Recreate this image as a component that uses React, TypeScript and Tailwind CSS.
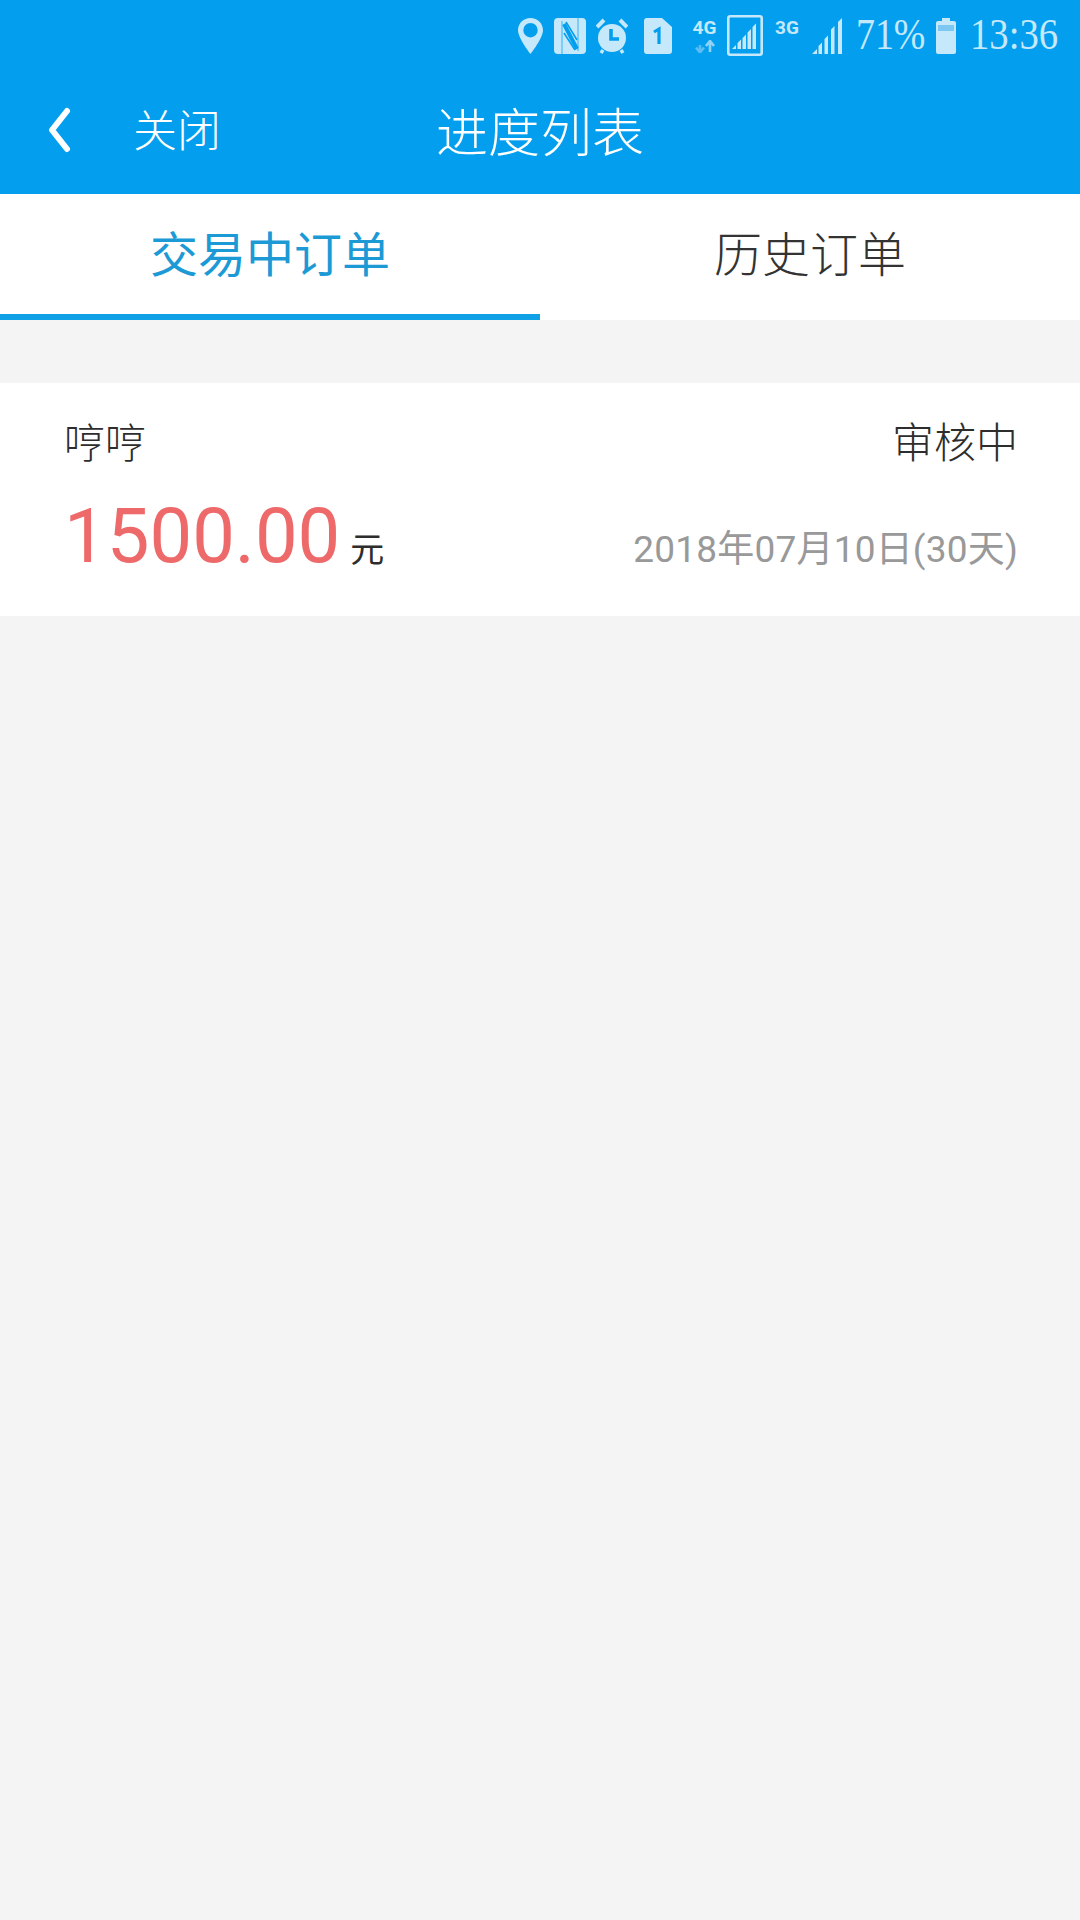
const cjk = "font-['Roboto','Noto_Sans_CJK_SC',sans-serif]";

function StatusBar() {
  const c = "#c5e8fb";
  return (
    <div className="h-[70px] flex items-center justify-end pr-[18px] text-[#c5e8fb] font-['Liberation_Serif','Noto_Sans_CJK_SC',serif]">
      <svg width="25" height="36" viewBox="0 0 25 36" className="mt-[2px]">
        <path fillRule="evenodd" fill={c} d="M12.5 0C5.6 0 0 5.4 0 12.2 0 20 12.5 36 12.5 36S25 20 25 12.2C25 5.4 19.4 0 12.5 0Zm0 5a7.2 7.2 0 1 1 0 14.4 7.2 7.2 0 0 1 0-14.4Z" />
      </svg>
      <svg width="32" height="36" viewBox="0 0 32 36" className="ml-[11px] mt-[2px]">
        <rect width="32" height="36" rx="4" fill={c} />
        <path d="M8 36V3M24 0v33" stroke="#039fee" strokeWidth="1.6" opacity=".45" />
        <path d="M10 6 23 31" fill="none" stroke="#039fee" strokeWidth="4" />
        <path d="M10 15 21 32M12 4l11 18" fill="none" stroke="#039fee" strokeWidth="1.6" />
      </svg>
      <svg width="32" height="36" viewBox="0 0 32 36" className="ml-[10px] mt-[2px]">
        <circle cx="16" cy="20" r="14" fill={c} />
        <path d="M15 11v10h8" fill="none" stroke="#039fee" strokeWidth="3.6" />
        <path d="M1 9 8 2M31 9l-7-7" stroke={c} strokeWidth="4" />
        <path d="m7 32-2 3M25 32l2 3" stroke={c} strokeWidth="3.4" />
      </svg>
      <svg width="28" height="36" viewBox="0 0 28 36" className="ml-[16px] mt-[2px]">
        <path d="M3 0h15l10 9v24a3 3 0 0 1-3 3H3a3 3 0 0 1-3-3V3a3 3 0 0 1 3-3Z" fill={c} />
        <path d="M10 14l5-3v15" fill="none" stroke="#039fee" strokeWidth="3.2" />
      </svg>
      <div className="ml-[20px] w-[25px] h-[36px] flex flex-col items-center mt-[4px]">
        <span className="font-['Roboto'] font-bold text-[19px] leading-[18px]">4G</span>
        <svg width="22" height="13" viewBox="0 0 22 13" className="mt-[3px]">
          <path d="M6 12V5M2 7.500l4 5 4-5" fill="none" stroke="#5cbdf2" strokeWidth="2.6" />
          <path d="M16 12V2M12 6l4-5 4 5" fill="none" stroke="#8fd2f6" strokeWidth="2.6" />
        </svg>
      </div>
      <svg width="36" height="41" viewBox="0 0 36 41" className="ml-[10px]">
        <rect x="1.3" y="1.3" width="33.4" height="38.4" rx="2" fill="none" stroke={c} strokeWidth="2.6" />
        <path fill={c} d="M5 34l4-4v4ZM10.500 34v-6l3.500-3.500V34ZM15.500 34V23l3.500-3.500V34ZM20.500 34V17.500l3.500-3.500V34ZM25.500 34V12l3.500-3.500V34Z" />
      </svg>
      <span className="ml-[12px] w-[24px] self-start mt-[19px] font-['Roboto'] font-bold text-[19px] leading-[18px]">3G</span>
      <svg width="31" height="36" viewBox="0 0 31 36" className="ml-[13px] mt-[2px]">
        <path fill={c} d="M0 36l5-5v5ZM6.500 36V28l3.500-3.500V36ZM12.500 36V21l3.500-3.500V36ZM19 36V11.500L22.500 8V36ZM26 36V4l4-4v36Z" />
      </svg>
      <span className="ml-[13px] text-[44px] leading-[44px] w-[69px] whitespace-nowrap scale-x-[0.86] origin-left">71%</span>
      <svg width="20" height="36" viewBox="0 0 20 36" className="ml-[11px] mt-[2px]">
        <path d="M6 0h8v3h4a2 2 0 0 1 2 2v29a2 2 0 0 1-2 2H2a2 2 0 0 1-2-2V5a2 2 0 0 1 2-2h4Z" fill={c} />
        <rect x="2" y="7" width="16" height="6" fill="#7cc8f3" />
      </svg>
      <span className="ml-[14px] text-[44px] leading-[44px] w-[92px] whitespace-nowrap scale-x-[0.88] origin-left">13:36</span>
    </div>
  );
}

export default function App() {
  return (
    <div className={`w-[1080px] h-[1920px] bg-[#f4f4f4] flex flex-col ${cjk}`}>
      <div className="bg-[#039fee] h-[194px] flex flex-col shrink-0">
        <StatusBar />
        <div className="relative h-[124px] flex items-center text-white font-light">
          <svg width="24" height="46" viewBox="0 0 24 46" className="ml-[47px] mb-[4px]">
            <path d="M20 4 5 23l15 19" fill="none" stroke="#fff" strokeWidth="6" strokeLinecap="round" strokeLinejoin="round" />
          </svg>
          <span className="ml-[62px] text-[44px] leading-[52px]">关闭</span>
          <span className="absolute left-0 right-0 top-[35px] text-center text-[52px] leading-[60px]">进度列表</span>
        </div>
      </div>
      <div className="h-[126px] bg-white flex shrink-0">
        <div className="w-1/2 flex items-center justify-center border-b-[6px] border-[#0fa0e6] text-[48px] text-[#1c9ad6] pt-[4px]">交易中订单</div>
        <div className="w-1/2 flex items-center justify-center text-[48px] text-[#333333] font-light pb-[2px]">历史订单</div>
      </div>
      <div className="mt-[63px] h-[233px] bg-white pl-[64px] pr-[62px] flex flex-col shrink-0">
        <div className="flex justify-between items-center mt-[34px] h-[54px] text-[#2d2d2d]">
          <span className="text-[41px] leading-[54px] font-light">哼哼</span>
          <span className="text-[42px] leading-[54px] font-light">审核中</span>
        </div>
        <div className="flex justify-between items-baseline mt-[21px]">
          <div className="flex items-baseline">
            <span className="text-[76px] leading-[88px] text-[#ee6a6a]">1500.00</span>
            <span className="ml-[10px] text-[34px] text-[#2d2d2d]">元</span>
          </div>
          <span className="text-[37px] tracking-[0.2px] text-[#999999] whitespace-nowrap">2018年07月10日(30天)</span>
        </div>
      </div>
    </div>
  );
}
